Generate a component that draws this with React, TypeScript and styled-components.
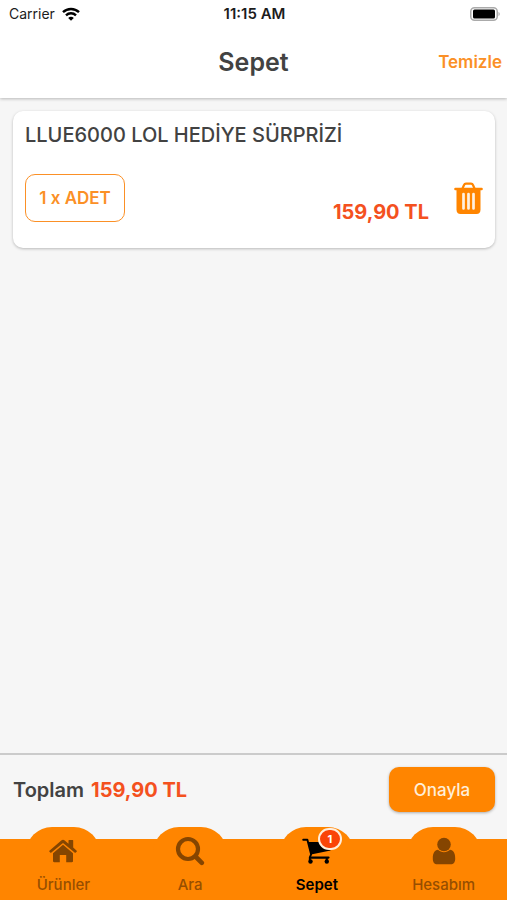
import React from "react";
import styled, { createGlobalStyle } from "styled-components";

const GlobalStyle = createGlobalStyle`
  *, *::before, *::after { box-sizing: border-box; }
  body { margin: 0; background: #f6f6f6; }
  body, button { font-family: Inter, "Noto Sans", sans-serif; }
  button { margin: 0; cursor: pointer; }
`;

const Screen = styled.div`
  display: flex;
  flex-direction: column;
  min-height: 100vh;
  background: #f6f6f6;
  color: #424242;
`;

const Top = styled.header`
  background: #fff;
  box-shadow: 0 1px 3px rgba(0, 0, 0, 0.25);
`;

const StatusBar = styled.div`
  display: grid;
  grid-template-columns: 1fr auto 1fr;
  align-items: center;
  height: 27px;
  padding: 0 7px 0 9px;
  color: #1c1c1c;
  font-size: 14px;
`;

const Carrier = styled.span`
  display: flex;
  align-items: center;
  gap: 7px;
`;

const Clock = styled.time`
  font-size: 15px;
  font-weight: 600;
`;

const Battery = styled.span`
  display: flex;
  justify-content: flex-end;
`;

const TitleBar = styled.div`
  display: grid;
  grid-template-columns: 1fr auto 1fr;
  align-items: center;
  height: 71px;
  padding: 0 5px 2px;
`;

const Title = styled.h1`
  grid-column: 2;
  margin: 0;
  font-size: 25px;
  font-weight: 600;
`;

const ClearButton = styled.button`
  justify-self: end;
  padding: 0;
  border: 0;
  background: none;
  color: #fb9026;
  font-size: 17px;
  font-weight: 600;
`;

const Content = styled.main`
  flex: 1;
  padding: 13px 12px 13px 13px;
`;

const Card = styled.article`
  padding: 12px;
  border-radius: 10px;
  background: #fff;
  box-shadow: 0 1px 3px rgba(0, 0, 0, 0.25);
`;

const ProductName = styled.h2`
  margin: 0;
  font-size: 20px;
  font-weight: 500;
  line-height: 24px;
`;

const CardRow = styled.div`
  display: flex;
  align-items: center;
  height: 48px;
  margin: 27px 0 14px;
`;

const QuantityButton = styled.button`
  width: 100px;
  height: 48px;
  padding: 0;
  border: 1px solid #fb9026;
  border-radius: 10px;
  background: #fff;
  color: #fb9026;
  font-size: 17px;
  font-weight: 600;
`;

const Price = styled.strong`
  color: #f4511e;
  font-size: 20px;
  font-weight: 700;
  line-height: 24px;
`;

const CardPrice = styled(Price)`
  align-self: flex-end;
  margin: 0 25px 0 auto;
  line-height: 20px;
`;

const DeleteButton = styled.button`
  display: flex;
  padding: 0;
  border: 0;
  background: none;
  color: #ff8500;
`;

const Summary = styled.section`
  display: flex;
  align-items: center;
  justify-content: space-between;
  height: 86px;
  padding: 0 12px 15px 13px;
  border-top: 2px solid #cbcbcb;
`;

const Total = styled.p`
  display: flex;
  gap: 7px;
  margin: 0;
  font-size: 20px;
  font-weight: 600;
  line-height: 24px;
`;

const ConfirmButton = styled.button`
  width: 106px;
  height: 45px;
  padding: 0;
  border: 0;
  border-radius: 10px;
  background: #ff8500;
  box-shadow: 0 1px 3px rgba(0, 0, 0, 0.3);
  color: #ffeed8;
  font-size: 17px;
  font-weight: 500;
`;

const TabBar = styled.nav`
  display: grid;
  grid-template-columns: repeat(4, 1fr);
  justify-items: center;
  height: 61px;
  background: #ff8500;
`;

const Tab = styled.button<{ $active: boolean }>`
  display: flex;
  flex-direction: column;
  align-items: center;
  gap: 9px;
  width: 74px;
  height: 73px;
  margin-top: -12px;
  padding: 8px 0 0;
  border: 0;
  border-radius: 26px 26px 0 0;
  background: #ff8500;
  color: ${({ $active }) => ($active ? "#000" : "#854500")};
  font-size: 15px;
  font-weight: ${({ $active }) => ($active ? 600 : 500)};
  line-height: 18px;
`;

const TabIcon = styled.span`
  position: relative;
  display: flex;
  align-items: center;
  justify-content: center;
  width: 32px;
  height: 32px;
`;

const TabLabel = styled.span<{ $active: boolean }>`
  opacity: ${({ $active }) => ($active ? 1 : 0.85)};
`;

const Badge = styled.span`
  position: absolute;
  top: -7px;
  right: -9px;
  width: 24px;
  height: 22px;
  border: 2px solid #ffeedd;
  border-radius: 11px;
  background: #fa4408;
  color: #fff;
  font-size: 11px;
  font-weight: 700;
  line-height: 18px;
  text-align: center;
`;

const WifiIcon = () => (
  <svg width="18" height="14" viewBox="0 0 18 14" fill="none" stroke="#000" strokeWidth="2.4" aria-hidden="true">
    <path d="M1 5.2C5.4.9 12.6.9 17 5.2M4 8.3c2.8-2.7 7.2-2.7 10 0" />
    <path d="M9 13.7 6.2 10.9c1.6-1.4 4-1.4 5.6 0Z" fill="#000" stroke="none" />
  </svg>
);

const BatteryIcon = () => (
  <svg width="30" height="14" viewBox="0 0 30 14" aria-label="Battery full">
    <rect x="0.75" y="0.75" width="26.5" height="12.5" rx="3.8" fill="#fff" stroke="#aaa" strokeWidth="1.5" />
    <rect x="3" y="2.5" width="22" height="9" rx="1.5" fill="#000" />
    <path d="M28.5 5c1.6.6 1.6 3.4 0 4Z" fill="#aaa" />
  </svg>
);

const TrashIcon = () => (
  <svg width="29" height="32" viewBox="0 0 29 32" fill="none" aria-hidden="true">
    <path d="M8.5 6.5 10 3c.4-1 1-1.3 2-1.3h5c1 0 1.6.3 2 1.3l1.5 3.500" stroke="currentColor" strokeWidth="2.2" />
    <rect x="0.2" y="5.7" width="28.6" height="2.6" rx="1.2" fill="currentColor" />
    <path d="M2.500 7h24v20.500c0 3-1.500 4.500-4 4.500h-16c-2.500 0-4-1.500-4-4.500Z" fill="currentColor" />
    <path d="M9.500 12v14.500M14.500 12v14.500M19.500 12v14.500" stroke="#fff0df" strokeWidth="2.700" strokeLinecap="round" />
  </svg>
);

const HomeIcon = () => (
  <svg width="28" height="24" viewBox="0 0 28 24" fill="currentColor" aria-hidden="true">
    <path d="M4 14.3 14 5.8l10 8.500V22c0 .8-.4 1.200-1.200 1.200h-5.600V16h-6.400v7.200H5.200C4.400 23.200 4 22.800 4 22Z" />
    <path d="m.4 11.700 11.900-10.300c1-.8 2.400-.8 3.400 0l3.800 3.300V1.500c0-.4.2-.6.6-.6h3.500c.4 0 .6.2.6.6v7.100l3.500 3.100c.3.300.3.500.1.800l-1 1.100c-.2.300-.6.300-.9.100L14 3.900 2.100 13.700c-.3.200-.6.200-.9-.1l-.9-1.100c-.2-.3-.2-.5.1-.8Z" />
  </svg>
);

const SearchIcon = () => (
  <svg width="30" height="30" viewBox="0 0 30 30" fill="none" stroke="currentColor" aria-hidden="true">
    <circle cx="13" cy="13" r="10" strokeWidth="4.200" />
    <path d="m20.500 20.500 6.300 6.300" strokeWidth="4.600" strokeLinecap="round" />
  </svg>
);

const CartIcon = () => (
  <svg width="29" height="26" viewBox="0 0 29 26" fill="none" stroke="currentColor" aria-hidden="true">
    <path d="M1.200 1.800h4.200l3.700 14.500-1.300 3.200v3" strokeWidth="1.900" strokeLinecap="round" strokeLinejoin="round" />
    <path d="M6 4h22.500v8.600L9 16.600Z" fill="currentColor" stroke="none" />
    <path d="M8 19.600h18.500" strokeWidth="2.200" strokeLinecap="round" />
    <path d="M24.800 19.600v3" strokeWidth="2" />
    <circle cx="8.500" cy="23.500" r="2.200" fill="currentColor" stroke="none" />
    <circle cx="24.800" cy="23.500" r="2.200" fill="currentColor" stroke="none" />
  </svg>
);

const UserIcon = () => (
  <svg width="24" height="28" viewBox="0 0 24 28" fill="currentColor" aria-hidden="true">
    <circle cx="12" cy="7.500" r="6.800" />
    <path d="M6 12.800c3.200 3.300 8.800 3.300 12 0 3.400.3 5.200 3.400 5.200 8.600 0 4-1.600 5.800-4.600 5.800H5.400c-3 0-4.600-1.800-4.600-5.800 0-5.200 1.800-8.300 5.200-8.600Z" />
  </svg>
);

const tabs = [
  { label: "Ürünler", Icon: HomeIcon, count: 0 },
  { label: "Ara", Icon: SearchIcon, count: 0 },
  { label: "Sepet", Icon: CartIcon, count: 1 },
  { label: "Hesabım", Icon: UserIcon, count: 0 },
];

export default function App() {
  return (
    <Screen lang="tr">
      <GlobalStyle />
      <Top>
        <StatusBar>
          <Carrier>
            Carrier
            <WifiIcon />
          </Carrier>
          <Clock>11:15 AM</Clock>
          <Battery>
            <BatteryIcon />
          </Battery>
        </StatusBar>
        <TitleBar>
          <Title>Sepet</Title>
          <ClearButton type="button">Temizle</ClearButton>
        </TitleBar>
      </Top>
      <Content>
        <Card>
          <ProductName>LLUE6000 LOL HEDİYE SÜRPRİZİ</ProductName>
          <CardRow>
            <QuantityButton type="button">1 x ADET</QuantityButton>
            <CardPrice>159,90 TL</CardPrice>
            <DeleteButton type="button" aria-label="Sil">
              <TrashIcon />
            </DeleteButton>
          </CardRow>
        </Card>
      </Content>
      <Summary>
        <Total>
          Toplam <Price>159,90 TL</Price>
        </Total>
        <ConfirmButton type="button">Onayla</ConfirmButton>
      </Summary>
      <TabBar>
        {tabs.map(({ label, Icon, count }) => {
          const active = label === "Sepet";
          return (
            <Tab key={label} type="button" $active={active} aria-current={active ? "page" : undefined}>
              <TabIcon>
                <Icon />
                {count > 0 && <Badge>{count}</Badge>}
              </TabIcon>
              <TabLabel $active={active}>{label}</TabLabel>
            </Tab>
          );
        })}
      </TabBar>
    </Screen>
  );
}
